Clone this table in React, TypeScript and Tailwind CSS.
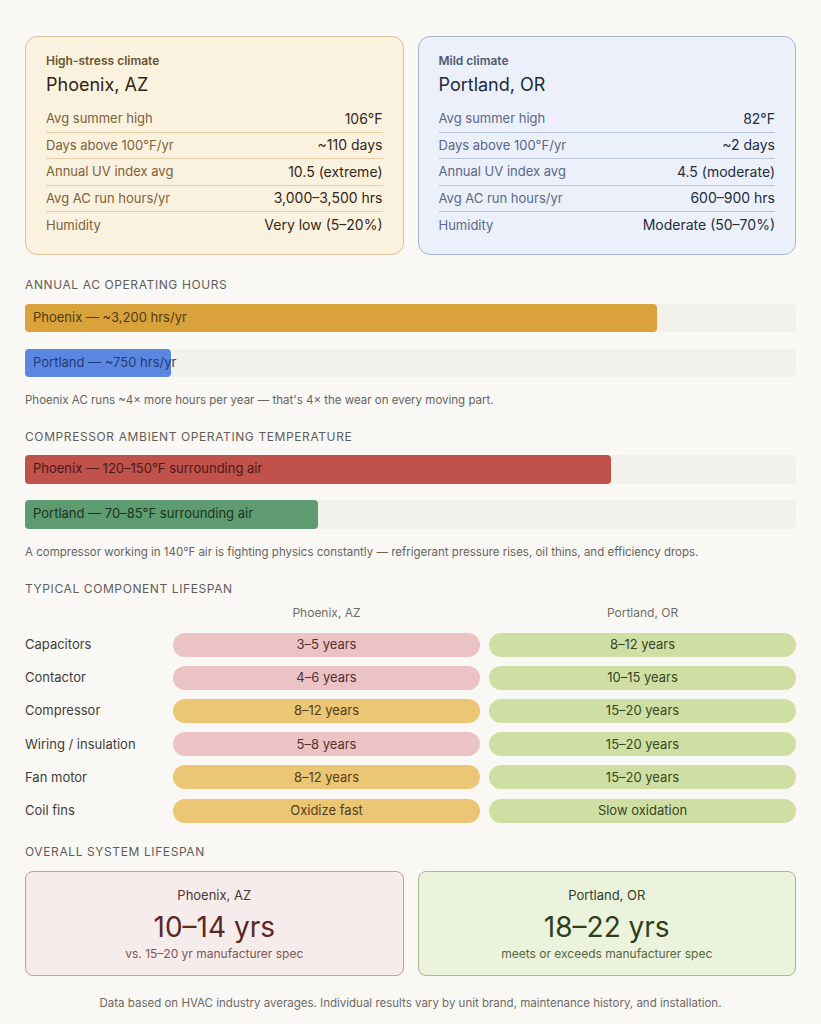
import * as React from "react";

// 城市对比数据
const phoenixStats: [string, string][] = [
  ["Avg summer high", "106°F"],
  ["Days above 100°F/yr", "~110 days"],
  ["Annual UV index avg", "10.5 (extreme)"],
  ["Avg AC run hours/yr", "3,000–3,500 hrs"],
  ["Humidity", "Very low (5–20%)"],
];

const portlandStats: [string, string][] = [
  ["Avg summer high", "82°F"],
  ["Days above 100°F/yr", "~2 days"],
  ["Annual UV index avg", "4.5 (moderate)"],
  ["Avg AC run hours/yr", "600–900 hrs"],
  ["Humidity", "Moderate (50–70%)"],
];

type Tone = "pink" | "amber" | "green";

const lifespan: { part: string; phx: string; phxTone: Tone; pdx: string }[] = [
  { part: "Capacitors", phx: "3–5 years", phxTone: "pink", pdx: "8–12 years" },
  { part: "Contactor", phx: "4–6 years", phxTone: "pink", pdx: "10–15 years" },
  { part: "Compressor", phx: "8–12 years", phxTone: "amber", pdx: "15–20 years" },
  { part: "Wiring / insulation", phx: "5–8 years", phxTone: "pink", pdx: "15–20 years" },
  { part: "Fan motor", phx: "8–12 years", phxTone: "amber", pdx: "15–20 years" },
  { part: "Coil fins", phx: "Oxidize fast", phxTone: "amber", pdx: "Slow oxidation" },
];

const pillTone: Record<Tone, string> = {
  pink: "bg-[#ebc3c4] text-[#532f2f]",
  amber: "bg-[#ebc675] text-[#553d14]",
  green: "bg-[#cfdfa4] text-[#38461f]",
};

const SectionLabel: React.FC<{ children: React.ReactNode; className?: string }> = ({ children, className }) => (
  <div className={"text-xs leading-4 uppercase tracking-[0.05em] text-[#5f5d58] " + (className ?? "")}>
    {children}
  </div>
);

const ClimateCard: React.FC<{
  kicker: string;
  city: string;
  rows: [string, string][];
  variant: "hot" | "mild";
}> = ({ kicker, city, rows, variant }) => {
  const hot = variant === "hot";
  return (
    <div
      className={
        "rounded-xl border px-5 pt-4 pb-[15px] " +
        (hot ? "bg-[#fbf1df] border-[#d9c39b]" : "bg-[#ebf0fb] border-[#a8b5d1]")
      }
    >
      <div className={"text-xs leading-4 font-semibold " + (hot ? "text-[#6b5430]" : "text-[#4d5a72]")}>{kicker}</div>
      <div className={"mt-1 text-lg leading-6 " + (hot ? "text-[#2e2414]" : "text-[#232a38]")}>{city}</div>
      <div className="mt-[9px]">
        {rows.map(([k, v], i) => (
          <div
            key={k}
            className={
              "flex h-[26.5px] items-center justify-between " +
              (i < rows.length - 1 ? (hot ? "border-b border-[#e3cfa3]" : "border-b border-[#bcc7dd]") : "")
            }
          >
            <span className={"text-[13px] " + (hot ? "text-[#7d6238]" : "text-[#5a6888]")}>{k}</span>
            <span className={"text-sm " + (hot ? "text-[#33281a]" : "text-[#262d3b]")}>{v}</span>
          </div>
        ))}
      </div>
    </div>
  );
};

const Bar: React.FC<{ label: string; pct: number; color: string; text: string; tall?: boolean }> = ({
  label,
  pct,
  color,
  text,
  tall,
}) => (
  <div className={"rounded bg-[#f3f1ec] " + (tall ? "h-[29px]" : "h-7")}>
    <div
      className={"flex h-full items-center rounded px-2 text-[13px] whitespace-nowrap " + color + " " + text}
      style={{ width: `${pct}%` }}
    >
      {label}
    </div>
  </div>
);

export default function App() {
  return (
    <div
      className="min-h-screen bg-[#f9f8f5] px-[25px] pt-9 pb-4"
      style={{ fontFamily: "Inter, 'Noto Sans', 'Liberation Sans', sans-serif" }}
    >
      {/* 顶部城市卡片 */}
      <div className="grid grid-cols-2 gap-[14px]">
        <ClimateCard kicker="High-stress climate" city="Phoenix, AZ" rows={phoenixStats} variant="hot" />
        <ClimateCard kicker="Mild climate" city="Portland, OR" rows={portlandStats} variant="mild" />
      </div>

      {/* AC 运行时长 */}
      <SectionLabel className="mt-[22px]">Annual AC operating hours</SectionLabel>
      <div className="mt-[11px] flex flex-col gap-[17px]">
        <Bar label="Phoenix — ~3,200 hrs/yr" pct={82} color="bg-[#d9a23b]" text="text-[#4f3a12]" />
        <Bar label="Portland — ~750 hrs/yr" pct={19} color="bg-[#5b87e1]" text="text-[#1f3b7a]" />
      </div>
      <p className="mt-[15px] text-[11.5px] leading-4 text-[#67645e]">
        Phoenix AC runs ~4× more hours per year — that's 4× the wear on every moving part.
      </p>

      {/* 压缩机环境温度 */}
      <SectionLabel className="mt-[21px]">Compressor ambient operating temperature</SectionLabel>
      <div className="mt-[10px] flex flex-col gap-4">
        <Bar label="Phoenix — 120–150°F surrounding air" pct={76} color="bg-[#c0514b]" text="text-[#4a1a17]" tall />
        <Bar label="Portland — 70–85°F surrounding air" pct={38} color="bg-[#5f9b70]" text="text-[#163620]" tall />
      </div>
      <p className="mt-[15px] text-[11.5px] leading-4 text-[#67645e]">
        A compressor working in 140°F air is fighting physics constantly — refrigerant pressure rises, oil thins, and
        efficiency drops.
      </p>

      {/* 部件寿命 */}
      <SectionLabel className="mt-[21px]">Typical component lifespan</SectionLabel>
      <div className="mt-2 grid grid-cols-[139px_1fr_1fr] gap-x-[9px] gap-y-[9.2px]">
        <div />
        <div className="text-center text-xs leading-4 text-[#706d67]">Phoenix, AZ</div>
        <div className="text-center text-xs leading-4 text-[#706d67]">Portland, OR</div>
        {lifespan.map((r, i) => (
          <React.Fragment key={r.part}>
            <div className={"flex h-6 items-center text-[13px] text-[#3f3d39] " + (i === 0 ? "mt-[3px]" : "")}>
              {r.part}
            </div>
            <div
              className={
                "flex h-6 items-center justify-center rounded-full text-[13px] " +
                pillTone[r.phxTone] +
                (i === 0 ? " mt-[3px]" : "")
              }
            >
              {r.phx}
            </div>
            <div
              className={
                "flex h-6 items-center justify-center rounded-full text-[13px] " +
                pillTone.green +
                (i === 0 ? " mt-[3px]" : "")
              }
            >
              {r.pdx}
            </div>
          </React.Fragment>
        ))}
      </div>

      {/* 系统总寿命 */}
      <SectionLabel className="mt-[21px]">Overall system lifespan</SectionLabel>
      <div className="mt-[11px] grid grid-cols-2 gap-[14px]">
        <div className="flex h-[105px] flex-col items-center rounded-lg border border-[#bf9f9f] bg-[#f7ecec] pt-[15px]">
          <div className="text-[13px] leading-4 text-[#4e3434]">Phoenix, AZ</div>
          <div className="mt-[7px] text-[28px] leading-[34px] text-[#5b2626]">10–14 yrs</div>
          <div className="mt-[2px] text-xs leading-4 text-[#7d5656]">vs. 15–20 yr manufacturer spec</div>
        </div>
        <div className="flex h-[105px] flex-col items-center rounded-lg border border-[#a9b98e] bg-[#ebf3dc] pt-[15px]">
          <div className="text-[13px] leading-4 text-[#34402a]">Portland, OR</div>
          <div className="mt-[7px] text-[28px] leading-[34px] text-[#2f3f1d]">18–22 yrs</div>
          <div className="mt-[2px] text-xs leading-4 text-[#56663d]">meets or exceeds manufacturer spec</div>
        </div>
      </div>

      <p className="mt-[19px] text-center text-[11.5px] leading-4 text-[#6c6a65]">
        Data based on HVAC industry averages. Individual results vary by unit brand, maintenance history, and
        installation.
      </p>
    </div>
  );
}
